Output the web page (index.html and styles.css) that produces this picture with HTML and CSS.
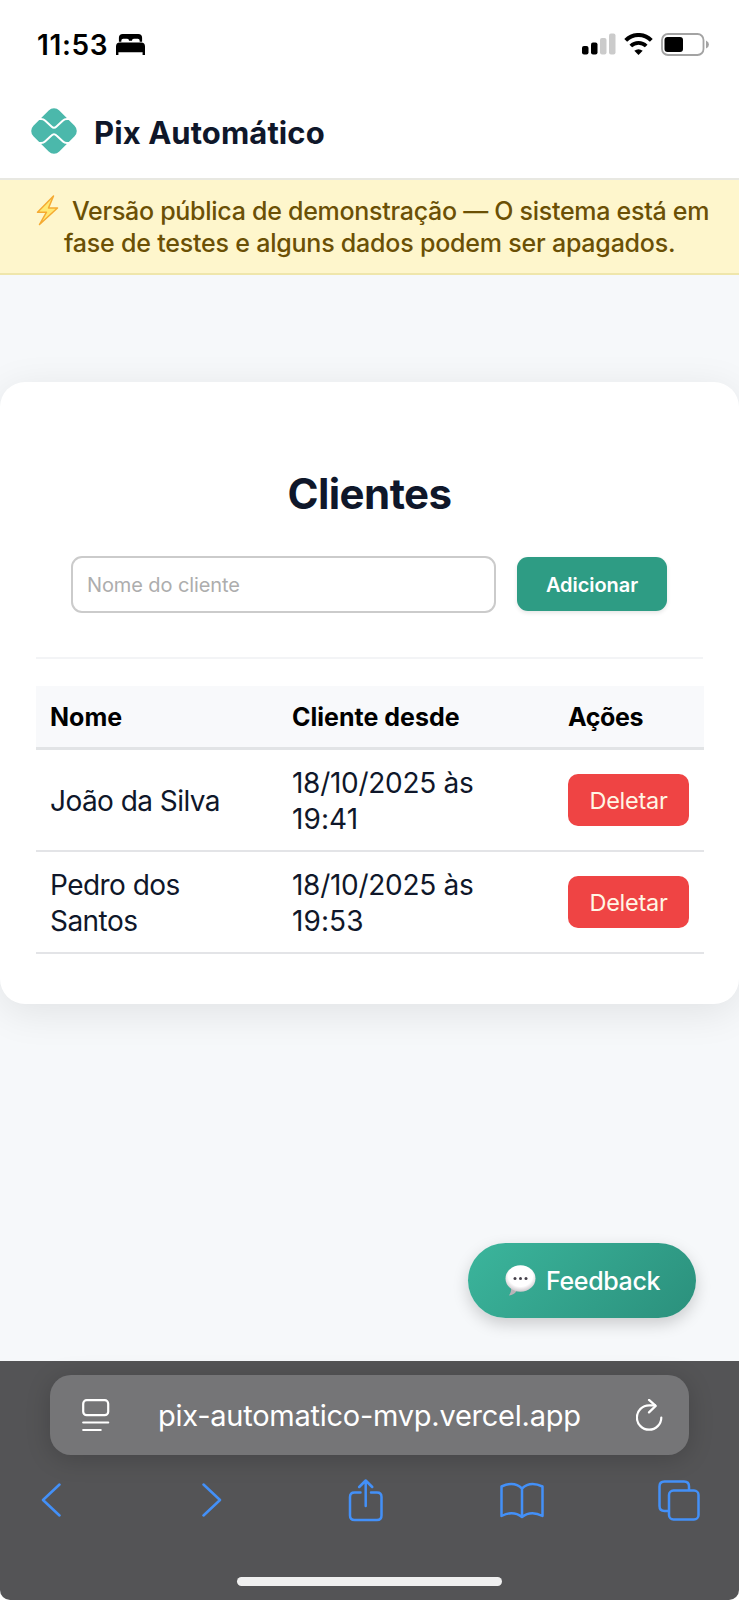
FILE: index.html
```html
<!DOCTYPE html>
<html lang="pt-BR">
<head>
<meta charset="utf-8">
<title>Pix Automático</title>
<link rel="stylesheet" href="styles.css">
</head>
<body>
<div class="phone">
  <div class="status">
    <div class="status-left">
      <span class="time">11:53</span>
      <svg class="bed" width="29" height="21" viewBox="0 0 30 22" preserveAspectRatio="none"><path d="M3 8V4q0-4 4-4h16q4 0 4 4v4h-2.500V7q0-2-2-2h-4q-2 0-2 2h-3q0-2-2-2H7.500q-2 0-2 2v1zM0 22V13q0-4 4-4h22q4 0 4 4v9h-2.500v-3h-25v3z"/></svg>
    </div>
    <div class="status-right">
      <svg width="34" height="22" viewBox="0 0 34 22"><rect x="0" y="13" width="6.500" height="8.500" rx="2"/><rect x="9" y="9.500" width="6.500" height="12" rx="2"/><g fill="#cbcbcb"><rect x="18" y="5" width="6.500" height="16.500" rx="2"/><rect x="27" y="0.500" width="6.500" height="21" rx="2"/></g></svg>
      <svg class="wifi" width="29" height="22" viewBox="0 0 29 22"><g fill="none" stroke="#000" stroke-width="4"><path d="M1.700 7.300a18 18 0 0 1 25.600 0"/><path d="M6.800 13a11 11 0 0 1 15.400 0" stroke-width="3.800"/></g><path d="M14.500 22l-4.200-4.200q4.200-3.300 8.400 0z"/></svg>
      <svg class="battery" width="49" height="23" viewBox="0 0 49 23"><rect x="1" y="1" width="41.500" height="21" rx="6" fill="none" stroke="#a3a3a3" stroke-width="1.800"/><rect x="3.500" y="4" width="18.500" height="15" rx="3"/><path d="M45 7.500q3 1.500 3 4t-3 4z" fill="#a3a3a3"/></svg>
    </div>
  </div>
  <header class="header">
    <svg class="logo" width="48" height="48" viewBox="0 0 48 48"><rect x="5.700" y="5.700" width="36.600" height="36.600" rx="7.500" fill="#4bb8ab" transform="rotate(45 24 24)"/><g fill="none" stroke="#fff" stroke-width="2" stroke-linejoin="round"><path d="M5 12H11Q13.500 12 15 13.500L21.500 19.500Q24 22 26.500 19.500L33 13.500Q34.500 12 37 12H43"/><path d="M5 36H11Q13.500 36 15 34.500L21.500 28.500Q24 26 26.500 28.500L33 34.500Q34.500 36 37 36H43"/></g></svg>
    <h1 class="brand">Pix Automático</h1>
  </header>
  <div class="banner">
    <p class="banner-line first"><svg class="bolt" width="23" height="31" viewBox="0 0 23 31"><path d="M17.500 1L1.500 17.200h9L3.500 29.500 21.500 13h-9z" fill="#ffe873" stroke="#f5aa32" stroke-width="1.500" stroke-linejoin="round"/></svg><span>Versão pública de demonstração — O sistema está em</span></p>
    <p class="banner-line second">fase de testes e alguns dados podem ser apagados.</p>
  </div>
  <main class="main">
    <section class="card">
      <h2 class="title">Clientes</h2>
      <form class="form">
        <input class="input" type="text" placeholder="Nome do cliente">
        <button class="add" type="button">Adicionar</button>
      </form>
      <table class="table">
        <colgroup><col class="col-name"><col class="col-date"><col class="col-actions"></colgroup>
        <thead><tr><th>Nome</th><th>Cliente desde</th><th class="actions">Ações</th></tr></thead>
        <tbody>
          <tr><td class="name">João da Silva</td><td>18/10/2025 às<br><span class="hour">19:41</span></td><td><button class="delete" type="button">Deletar</button></td></tr>
          <tr><td class="name">Pedro dos<br>Santos</td><td>18/10/2025 às<br><span class="hour">19:53</span></td><td><button class="delete" type="button">Deletar</button></td></tr>
        </tbody>
      </table>
    </section>
    <button class="feedback" type="button">
      <svg width="31" height="31" viewBox="0 0 31 31"><defs><radialGradient id="bubble" cx=".5" cy=".4" r=".62"><stop offset=".65" stop-color="#fff"/><stop offset="1" stop-color="#c9c3c8"/></radialGradient></defs><path d="M6 21q1 5-2 9.500 5-.5 8-5z" fill="#b9b3b8"/><ellipse cx="15.500" cy="13.500" rx="15" ry="13.200" fill="url(#bubble)"/><g fill="#45404a"><circle cx="10" cy="13.500" r="1.500"/><circle cx="15.500" cy="13.500" r="1.500"/><circle cx="21" cy="13.500" r="1.500"/></g></svg>
      <span>Feedback</span>
    </button>
  </main>
  <footer class="browser">
    <div class="address">
      <svg width="28" height="33" viewBox="0 0 28 33" fill="none" stroke="#fff" stroke-width="2.200" stroke-linecap="round"><rect x="1.200" y="1.200" width="25" height="15" rx="3.500"/><path d="M1.200 23.500h25M1.200 31h17.500"/></svg>
      <span class="url">pix-automatico-mvp.vercel.app</span>
      <svg width="27" height="33" viewBox="0 0 27 33" fill="none" stroke="#fff" stroke-width="2.200" stroke-linecap="round" stroke-linejoin="round"><path d="M25.300 18.500A12.200 12.200 0 1 1 13.100 6.300h6"/><path d="M13 .9l6.700 6-6.700 6.500"/></svg>
    </div>
    <nav class="tools">
      <svg width="20" height="34" viewBox="0 0 20 34"><path d="M18.500 1.500L2 17l16.500 15.500"/></svg>
      <svg class="forward" width="20" height="34" viewBox="0 0 20 34"><path d="M1.500 1.500L18 17 1.500 32.500"/></svg>
      <svg class="share" width="36" height="43" viewBox="0 0 36 43"><path d="M12.500 13.500H6.500q-4.500 0-4.500 4.500V36.500q0 4.500 4.500 4.500h22.500q4.500 0 4.500-4.500V18q0-4.500-4.500-4.500h-6M17.700 27V1.500M11.200 8l6.500-6.500L24.200 8"/></svg>
      <svg class="book" width="44" height="37" viewBox="0 0 44 37"><path d="M22 6.500Q14-1.500 1.500 4.500v29.500Q13 28 22 35Q31 28 42.500 34V4.500Q30-1.500 22 6.500V35"/></svg>
      <svg class="tabs" width="42" height="41" viewBox="0 0 42 41"><path d="M10 31H6.500q-5 0-5-5V6.500q0-5 5-5H26q5 0 5 5V10"/><rect x="11" y="10.500" width="29.500" height="29" rx="4.500"/></svg>
    </nav>
    <div class="home"></div>
  </footer>
</div>
</body>
</html>
```
FILE: styles.css
```css
* { box-sizing: border-box; }
body { margin: 0; background: #fff; font-family: Inter, "Liberation Sans", sans-serif; color: #0f172a; }
h1, h2, p { margin: 0; }
svg { display: block; flex: none; }
button, input { font-family: inherit; border: 0; }
.phone { width: 739px; height: 1600px; display: flex; flex-direction: column; overflow: hidden; }

.status { height: 89px; display: flex; justify-content: space-between; padding: 33px 29px 0 37px; color: #000; }
.status-left, .status-right { display: flex; align-items: flex-start; }
.time { padding-top: 1px; font-size: 28px; line-height: 22px; font-weight: 600; white-space: nowrap; width: 79px; letter-spacing: .65px; }
.bed { margin-top: 1px; }
.wifi { margin-left: 8px; }
.battery { margin-left: 8px; }

.header { height: 91px; display: flex; align-items: center; padding: 0 0 5px 30px; border-bottom: 2px solid #e8e8e2; }
.brand { margin-left: 16px; padding-top: 3px; font-size: 31px; line-height: 38px; font-weight: 700; letter-spacing: .08px; white-space: nowrap; }

.banner { height: 95px; padding-top: 15px; background: #fef6cc; border-bottom: 2px solid #efe6ab; color: #6b5005; font-size: 25px; font-weight: 500; }
.banner-line { line-height: 32px; white-space: nowrap; }
.first { display: flex; padding-left: 36px; letter-spacing: -.28px; }
.first span { margin-left: 13px; }
.second { padding-left: 64px; letter-spacing: -.21px; }

.main { height: 1086px; background: #f6f8fa; padding-top: 107px; display: flex; flex-direction: column; }
.card { height: 622px; padding: 88px 36px 0; background: #fff; border-radius: 25px; box-shadow: 0 8px 40px rgba(0,0,0,.09); }
.title { text-align: center; font-size: 42px; line-height: 48px; font-weight: 700; letter-spacing: -.55px; }
.form { height: 104px; margin-top: 37px; padding: 1px 36px 0 35px; display: flex; justify-content: space-between; align-items: flex-start; border-bottom: 2px solid #f3f4f6; margin-bottom: 27px; }
.input { width: 425px; height: 57px; border: 2px solid #cbcbcb; border-radius: 11px; padding: 0 14px; font-size: 20px; letter-spacing: -.1px; }
.input::placeholder { color: #adadad; opacity: 1; }
.add { width: 150px; height: 54px; margin-top: 1px; padding: 1px 0 0; border-radius: 11px; background: #2e9c84; color: #fff; font-size: 20px; font-weight: 600; letter-spacing: -.05px; box-shadow: 0 2px 4px rgba(0,0,0,.1); }

.table { width: 668px; table-layout: fixed; border-collapse: separate; border-spacing: 0; }
.col-name { width: 241px; }
.col-date { width: 276px; }
.col-actions { width: 151px; }
th { height: 64px; padding: 0 14px; text-align: left; background: #f8f9fb; border-bottom: 3px solid #e2e4e6; color: #000; font-size: 25px; font-weight: 700; }
th:nth-child(2) { padding-left: 15px; }
th.actions { padding-left: 15px; letter-spacing: -.35px; }
td { height: 102px; padding: 2px 15px 0; border-bottom: 2px solid #e3e4e7; font-size: 28px; line-height: 36px; letter-spacing: -.28px; white-space: nowrap; }
td.name { padding-left: 14px; letter-spacing: -.55px; }
.hour { letter-spacing: .1px; }
.delete { display: block; width: 121px; height: 52px; margin-top: -2px; padding: 0; border-radius: 10px; background: #ef4444; color: #fff6e5; font-size: 23.500px; letter-spacing: -.25px; }

.feedback { width: 228px; height: 75px; margin: 239px 43px 0 0; align-self: flex-end; display: flex; align-items: center; padding: 0 0 0 37px; border-radius: 38px; background: linear-gradient(135deg, #3bb59c, #2b907c); color: #fff; font-size: 25px; font-weight: 500; letter-spacing: -.35px; box-shadow: 0 6px 16px rgba(0,0,0,.18); }
.feedback span { margin-left: 10px; }

.browser { height: 239px; background: #545456; border-radius: 0 0 10px 10px; padding: 14px 0 0; }
.address { width: 639px; height: 80px; margin-left: 50px; padding: 0 26px 0 32px; display: flex; align-items: center; border-radius: 21px; background: #757577; color: #fff; box-shadow: 0 4px 24px rgba(0,0,0,.18); }
.url { flex: 1; margin-left: 48px; padding-top: 2px; font-size: 29px; line-height: 36px; letter-spacing: -.25px; white-space: nowrap; }
.tools { height: 90px; padding-left: 41px; display: flex; align-items: center; }
.tools svg { fill: none; stroke: #4390f8; stroke-width: 2.500; stroke-linecap: round; stroke-linejoin: round; }
.forward { margin-left: 141px; }
.share { margin-left: 126px; }
.book { margin-left: 116px; }
.tabs { margin-left: 114px; }
.home { width: 265px; height: 9px; margin: 32px 0 0 237px; border-radius: 5px; background: #f0f0f0; }
```
